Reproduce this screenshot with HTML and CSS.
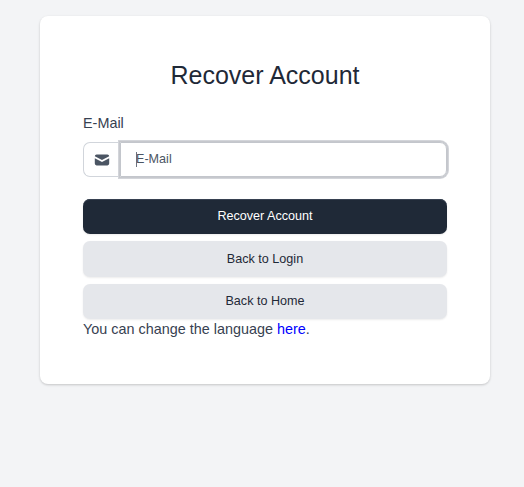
FILE: index.html
```html
<!DOCTYPE html>
<html lang="en">
<head>
<meta charset="utf-8">
<title>Recover Account</title>
<link rel="stylesheet" href="styles.css">
</head>
<body>
<main class="card">
  <h1 class="title">Recover Account</h1>
  <form class="form">
    <label class="label" for="email">E-Mail</label>
    <div class="field">
      <span class="prefix">
        <svg class="icon" viewBox="0 0 20 20" fill="currentColor" aria-hidden="true"><path d="M2.003 5.884L10 9.882l7.997-3.998A2 2 0 0016 4H4a2 2 0 00-1.997 1.884z"/><path d="M18 8.118l-8 4-8-4V14a2 2 0 002 2h12a2 2 0 002-2V8.118z"/></svg>
      </span>
      <div class="input" id="email"><span class="caret"></span><span>E-Mail</span></div>
    </div>
    <button class="button primary" type="button">Recover Account</button>
    <button class="button login" type="button">Back to Login</button>
    <button class="button home" type="button">Back to Home</button>
    <p class="note">You can change the language <a class="link" href="#">here</a>.</p>
  </form>
</main>
</body>
</html>
```
FILE: styles.css
```css
* { box-sizing: border-box; }
body {
  margin: 0;
  min-height: 487px;
  padding-top: 16px;
  background: #f3f4f6;
  color: #374151;
  font-family: "Liberation Sans", Arial, sans-serif;
}
.card {
  width: 450px;
  height: 368px;
  margin-left: 40px;
  padding: 41px 43px;
  border-radius: 8px;
  background: #fff;
  box-shadow: 0 1px 3px rgba(0, 0, 0, .12), 0 1px 2px rgba(0, 0, 0, .08);
}
.title {
  margin: 0;
  text-align: center;
  font-size: 25px;
  font-weight: 400;
  line-height: 36px;
  color: #1f2937;
}
.form { display: flex; flex-direction: column; }
.label {
  margin-top: 20px;
  font-size: 14.4px;
  line-height: 20px;
}
.field { display: flex; height: 35px; margin-top: 9px; }
.prefix {
  display: flex;
  align-items: center;
  justify-content: center;
  width: 37px;
  border: 1px solid #d1d5db;
  border-right: 0;
  border-radius: 7px 0 0 7px;
  color: #4b5563;
}
.icon { width: 18px; height: 18px; }
.input {
  display: flex;
  align-items: center;
  flex: 1;
  padding: 0 0 2px 15px;
  border: 1px solid #c3c6cc;
  border-radius: 0 7px 7px 0;
  box-shadow: 0 0 0 1px #c6c8cd, 0 0 0 2px #d3d5da;
  font-size: 12.6px;
  color: #4b5563;
}
.caret { width: 1px; height: 15px; margin: 2px -1px 0 0; background: #6b7280; }
.button {
  height: 36px;
  margin: 7px 0 0;
  padding: 0 0 1px;
  border: 0;
  border-radius: 7px;
  background: #e5e7eb;
  box-shadow: 0 1px 2px rgba(0, 0, 0, .08);
  font: 12.6px/20px "Liberation Sans", Arial, sans-serif;
  color: #1f2937;
}
.primary {
  height: 35px;
  margin-top: 22px;
  background: #1f2937;
  box-shadow: inset 0 1px 0 #374151, 0 1px 2px rgba(0, 0, 0, .08);
  color: #fff;
}
.home { height: 35px; }
.note { margin: 0; font-size: 14.4px; line-height: 20px; }
.link { color: #00f; text-decoration: none; }
```
